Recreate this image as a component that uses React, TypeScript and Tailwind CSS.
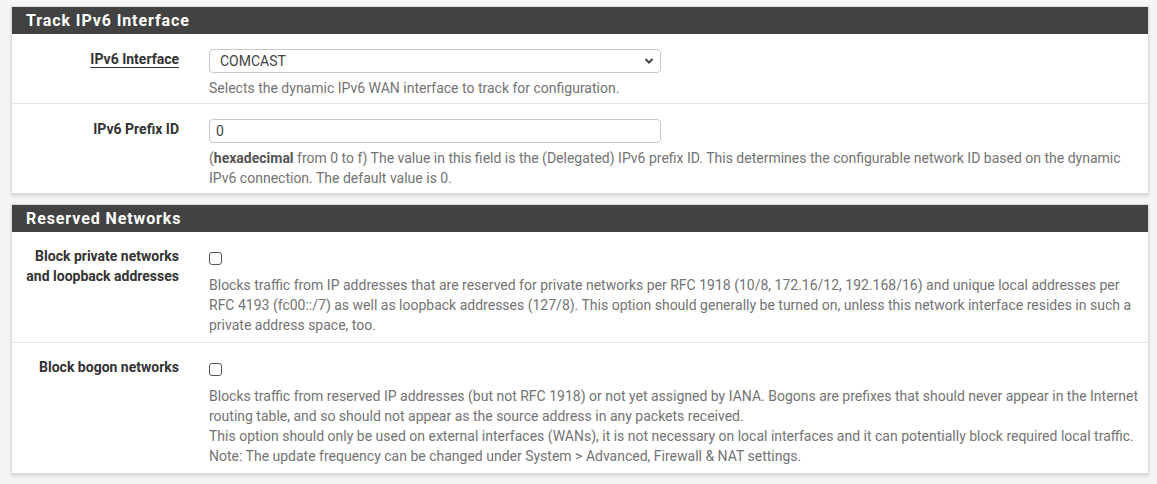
import { ReactNode } from 'react';

function Row({ label, children, last, check }: { label: ReactNode; children: ReactNode; last?: boolean; check?: boolean }) {
  return (
    <div className={`flex ${last ? '' : 'border-b border-[#e2e2e2]'}`}>
      <div
        className={`w-[182px] shrink-0 pr-[15px] text-right text-[14px] font-bold leading-[20px] text-[#333] ${check ? 'pt-[14px]' : 'pt-[15px]'}`}
      >
        {label}
      </div>
      <div className={`flex-1 pl-[15px] pr-[9px] pt-[15px] ${check ? 'pb-[7px]' : 'pb-[5px]'}`}>{children}</div>
    </div>
  );
}

function Panel({ title, children }: { title: string; children: ReactNode }) {
  return (
    <div className="border border-[#dcdcdc] bg-white shadow-[0_2px_3px_rgba(0,0,0,0.12)]">
      <div className="flex h-[27px] items-center bg-[#424242] px-[14px] text-[16px] font-bold tracking-[0.9px] text-white">
        {title}
      </div>
      {children}
    </div>
  );
}

function Help({ children, top = 'mt-[5px]' }: { children: ReactNode; top?: string }) {
  return <div className={`${top} text-[14px] leading-[20px] text-[#737373]`}>{children}</div>;
}

function Checkbox() {
  return <div className="mt-[5px] h-[13px] w-[13px] rounded-[3px] border border-[#555] bg-white" />;
}

export default function App() {
  return (
    <div className="min-h-[484px] bg-[#f5f5f5] pl-[11px] pr-[8px] pt-[6px] font-['Roboto',sans-serif]" style={{ width: 1157 }}>
      <Panel title="Track IPv6 Interface">
        <Row label={<span className="underline decoration-[1px] underline-offset-[3px]">IPv6 Interface</span>}>
          <div className="relative flex h-[24px] w-[452px] items-center rounded-[4px] border border-[#c8c8c8] bg-white pl-[10px] text-[14px] text-[#444]">
            COMCAST
            <svg className="absolute right-[6px] top-[7px]" width="10" height="8" viewBox="0 0 10 8">
              <path d="M1.5 2 L5 5.5 L8.5 2" fill="none" stroke="#444" strokeWidth="2" />
            </svg>
          </div>
          <Help>Selects the dynamic IPv6 WAN interface to track for configuration.</Help>
        </Row>
        <Row label="IPv6 Prefix ID" last>
          <div className="flex h-[24px] w-[452px] items-center rounded-[4px] border border-[#c8c8c8] bg-white pl-[6px] text-[14px] text-[#444]">
            0
          </div>
          <Help>
            (<b className="text-[#555]">hexadecimal</b> from 0 to f) The value in this field is the (Delegated) IPv6 prefix ID. This
            determines the configurable network ID based on the dynamic IPv6 connection. The default value is 0.
          </Help>
        </Row>
      </Panel>
      <div className="h-[10px]" />
      <Panel title="Reserved Networks">
        <Row
          check
          label={
            <>
              Block private networks
              <br />
              and loopback addresses
            </>
          }
        >
          <Checkbox />
          <Help top="mt-[10px]">
            Blocks traffic from IP addresses that are reserved for private networks per RFC 1918 (10/8, 172.16/12,
            192.168/16) and unique local addresses per RFC 4193 (fc00::/7) as well as loopback addresses (127/8). This
            option should generally be turned on, unless this network interface resides in such a private address space,
            too.
          </Help>
        </Row>
        <Row label="Block bogon networks" last check>
          <Checkbox />
          <Help top="mt-[10px]">
            Blocks traffic from reserved IP addresses (but not RFC 1918) or not yet assigned by IANA. Bogons are prefixes
            that should never appear in the Internet routing table, and so should not appear as the source address in any
            packets received.
            <br />
            This option should only be used on external interfaces (WANs), it is not necessary on local interfaces and it
            can potentially block required local traffic.
            <br />
            Note: The update frequency can be changed under System &gt; Advanced, Firewall &amp; NAT settings.
          </Help>
        </Row>
      </Panel>
    </div>
  );
}
